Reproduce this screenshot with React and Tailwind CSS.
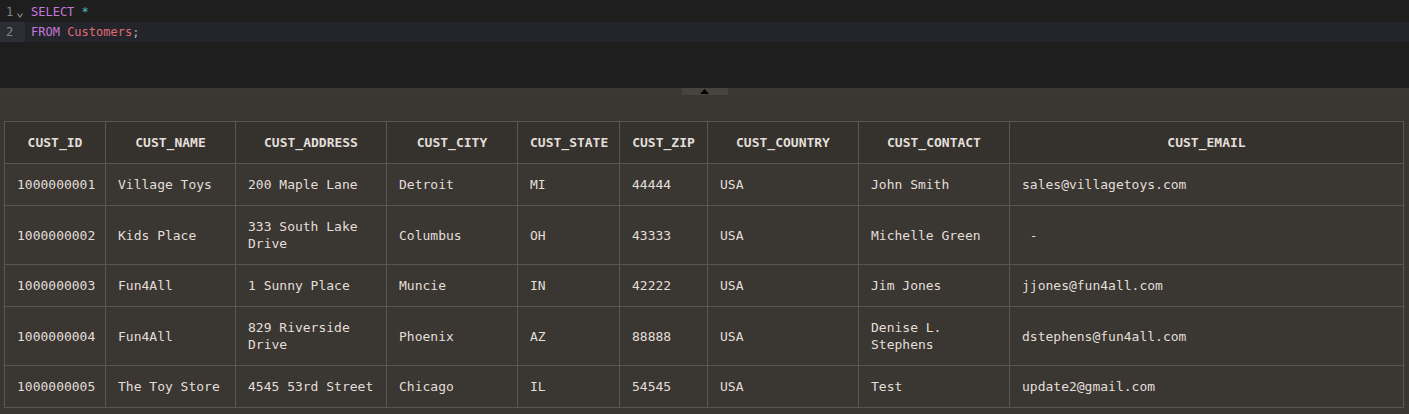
import React from 'react';

const columns = [
  { key: 'CUST_ID', width: 101 },
  { key: 'CUST_NAME', width: 130 },
  { key: 'CUST_ADDRESS', width: 151 },
  { key: 'CUST_CITY', width: 131 },
  { key: 'CUST_STATE', width: 102 },
  { key: 'CUST_ZIP', width: 88 },
  { key: 'CUST_COUNTRY', width: 151 },
  { key: 'CUST_CONTACT', width: 151 },
  { key: 'CUST_EMAIL', width: 394 },
];

const rows = [
  ['1000000001', 'Village Toys', '200 Maple Lane', 'Detroit', 'MI', '44444', 'USA', 'John Smith', 'sales@villagetoys.com'],
  ['1000000002', 'Kids Place', '333 South Lake Drive', 'Columbus', 'OH', '43333', 'USA', 'Michelle Green', ' -'],
  ['1000000003', 'Fun4All', '1 Sunny Place', 'Muncie', 'IN', '42222', 'USA', 'Jim Jones', 'jjones@fun4all.com'],
  ['1000000004', 'Fun4All', '829 Riverside Drive', 'Phoenix', 'AZ', '88888', 'USA', 'Denise L. Stephens', 'dstephens@fun4all.com'],
  ['1000000005', 'The Toy Store', '4545 53rd Street', 'Chicago', 'IL', '54545', 'USA', 'Test', 'update2@gmail.com'],
];

const mono = { fontFamily: '"DejaVu Sans Mono", "Liberation Mono", monospace' };

function Editor() {
  return (
    <div className="h-[88px] bg-[#1e1e1e] pt-[2px] text-[12px] leading-[20px]" style={mono}>
      <div className="flex h-[20px]">
        <div className="w-[25px] flex items-center pl-[6px] text-[#858585]">
          <span>1</span>
          <svg width="6" height="5" viewBox="0 0 6 5" className="ml-[4px] mt-[6px]">
            <path d="M0.5 0.5 L3 4 L5.5 0.5" fill="none" stroke="#8a8a8a" strokeWidth="1.2" />
          </svg>
        </div>
        <div className="pl-[6px] whitespace-pre">
          <span className="text-[#c678dd]">SELECT</span>{' '}
          <span className="text-[#56b6c2]">*</span>
        </div>
      </div>
      <div className="flex h-[20px] bg-[#23252a]">
        <div className="w-[25px] pl-[6px] bg-[#2b2e35] text-[#858585]">2</div>
        <div className="pl-[6px] whitespace-pre">
          <span className="text-[#c678dd]">FROM</span>{' '}
          <span className="text-[#e06c75]">Customers</span>
          <span className="text-[#abb2bf]">;</span>
        </div>
      </div>
    </div>
  );
}

function Splitter() {
  return (
    <div className="h-[7px] bg-[#3b3731] flex justify-center">
      <div className="w-[46px] h-[7px] bg-[#47433d] flex items-center justify-center">
        <svg width="9" height="5" viewBox="0 0 9 5">
          <path d="M0 5 L4.5 0 L9 5 Z" fill="#000" />
        </svg>
      </div>
    </div>
  );
}

function ResultTable() {
  return (
    <div className="bg-[#39352f] pt-[26px] pb-[7px] px-[4px]">
      <table className="table-fixed border-collapse w-[1399px] text-[13px] leading-[17px] text-[#e2dfda]" style={mono}>
        <colgroup>
          {columns.map((c) => (
            <col key={c.key} style={{ width: c.width }} />
          ))}
        </colgroup>
        <thead>
          <tr className="bg-[#35312c]">
            {columns.map((c) => (
              <th key={c.key} className="border border-[#5a5650] px-[12px] py-[12px] font-bold text-center">
                {c.key}
              </th>
            ))}
          </tr>
        </thead>
        <tbody>
          {rows.map((r) => (
            <tr key={r[0]} className="bg-[#3a3631]">
              {r.map((v, i) => (
                <td key={i} className="border border-[#5a5650] px-[12px] py-[12px] text-left align-middle whitespace-pre-wrap">
                  {v}
                </td>
              ))}
            </tr>
          ))}
        </tbody>
      </table>
    </div>
  );
}

export default function App() {
  return (
    <div className="w-[1409px] h-[414px] bg-[#39352f] overflow-hidden">
      <Editor />
      <Splitter />
      <ResultTable />
    </div>
  );
}
